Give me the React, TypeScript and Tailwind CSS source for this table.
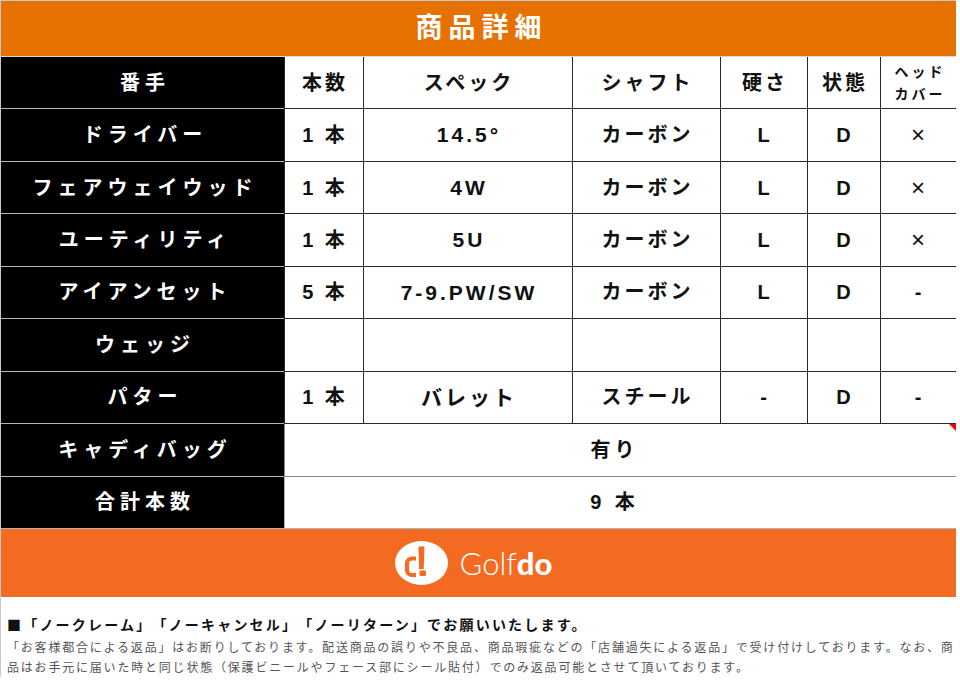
import React from "react";

const font = "font-['Liberation_Sans','Noto_Sans_CJK_JP',sans-serif]";

interface Club {
  name: string;
  count: string;
  spec: string;
  shaft: string;
  flex: string;
  state: string;
  cover: string;
}

const clubs: Club[] = [
  { name: "ドライバー", count: "1 本", spec: "14.5°", shaft: "カーボン", flex: "L", state: "D", cover: "×" },
  { name: "フェアウェイウッド", count: "1 本", spec: "4W", shaft: "カーボン", flex: "L", state: "D", cover: "×" },
  { name: "ユーティリティ", count: "1 本", spec: "5U", shaft: "カーボン", flex: "L", state: "D", cover: "×" },
  { name: "アイアンセット", count: "5 本", spec: "7-9.PW/SW", shaft: "カーボン", flex: "L", state: "D", cover: "-" },
  { name: "ウェッジ", count: "", spec: "", shaft: "", flex: "", state: "", cover: "" },
  { name: "パター", count: "1 本", spec: "バレット", shaft: "スチール", flex: "-", state: "D", cover: "-" },
];

const headCell =
  "flex items-center justify-center border-b border-[#b5b5b5] bg-black pl-[5px] text-[20px] font-bold tracking-[5px] text-white";
const cell =
  "flex items-center justify-center border-b border-l border-[#2a2a2a] pl-[2px] text-[20px] font-bold tracking-[3px] text-[#111]";

function LogoMark() {
  return (
    <svg viewBox="0 0 53 44" className="h-[44px] w-[53px]">
      <ellipse cx="26.5" cy="22" rx="26.5" ry="22" fill="#fff" />
      <path
        d="M21 17.5 h-4 a5 5 0 0 0 -5 5 v6.5 a5 5 0 0 0 5 5 h4"
        fill="none"
        stroke="#f36b21"
        strokeWidth="4.2"
      />
      <path d="M23.5 5.5 h6 l-0.8 22.5 h-4.6 z" fill="#f36b21" />
      <rect x="24.5" y="29.5" width="6.5" height="5.5" rx="1.2" fill="#f36b21" />
    </svg>
  );
}

export default function App() {
  return (
    <div className={`h-[692px] w-[960px] bg-white ${font} [text-spacing-trim:space-all]`}>
      <div className="w-[956px] border-l border-t border-[#c8c8c8]">
        <div className="flex h-[56px] items-center justify-center border-b border-[#d9d9d9] bg-[#e57200] pl-[6px] text-[27px] font-bold tracking-[6px] text-white">
          商品詳細
        </div>

        <div className="grid h-[472px] grid-cols-[283px_79px_209px_148px_87px_73px_76px] grid-rows-9">
          <div className={headCell}>番手</div>
          <div className={cell}>本数</div>
          <div className={cell}>スペック</div>
          <div className={cell}>シャフト</div>
          <div className={cell}>硬さ</div>
          <div className={cell}>状態</div>
          <div className="flex flex-col items-center justify-center border-b border-l border-[#2a2a2a] pl-[3px] text-[14px] font-bold leading-[22px] tracking-[3px] text-[#111]">
            <span>ヘッド</span>
            <span>カバー</span>
          </div>

          {clubs.map((c) => (
            <React.Fragment key={c.name}>
              <div className={headCell}>{c.name}</div>
              <div className={cell}>{c.count}</div>
              <div className={`${cell} tracking-[2px] text-[21px]`}>{c.spec}</div>
              <div className={cell}>{c.shaft}</div>
              <div className={cell}>{c.flex}</div>
              <div className={cell}>{c.state}</div>
              <div className={`${cell} ${c.cover === "×" ? "font-normal text-[24px]" : ""}`}>{c.cover}</div>
            </React.Fragment>
          ))}

          <div className={headCell}>キャディバッグ</div>
          <div className="relative col-span-6 flex items-center justify-center border-b border-l border-[#8a8a8a] pr-[12px] text-[20px] font-bold tracking-[4px] text-[#111]">
            有り
            <span className="absolute right-0 top-0 h-0 w-0 border-l-[7px] border-t-[7px] border-l-transparent border-t-[#ff0000]" />
          </div>

          <div className={headCell}>合計本数</div>
          <div className="col-span-6 flex items-center justify-center border-b border-l border-[#b5b5b5] pr-[12px] text-[20px] font-bold tracking-[4px] text-[#111]">
            9 本
          </div>
        </div>

        <div className="flex h-[68px] items-center justify-center gap-[12px] bg-[#f36b21] pr-[10px]">
          <LogoMark />
          <div className="flex items-baseline text-[31px] leading-none text-white">
            <span className="font-['Lato',sans-serif] font-light">Golf</span>
            <span className="font-['Lato',sans-serif] font-black">do</span>
          </div>
        </div>

        <div className="px-[6px] pt-[16px] font-['Noto_Sans_CJK_JP',sans-serif]">
          <p className="text-[14px] font-bold leading-[22px] tracking-[2.2px] text-[#111]">
            ■「ノークレーム」「ノーキャンセル」「ノーリターン」でお願いいたします。
          </p>
          <p className="mt-[2px] text-[12px] leading-[20px] tracking-[1.8px] text-[#555]">
            <span className="block whitespace-nowrap">
              「お客様都合による返品」はお断りしております。配送商品の誤りや不良品、商品瑕疵などの「店舗過失による返品」で受け付けしております。なお、商
            </span>
            <span className="block whitespace-nowrap">
              品はお手元に届いた時と同じ状態（保護ビニールやフェース部にシール貼付）でのみ返品可能とさせて頂いております。
            </span>
          </p>
        </div>
      </div>
    </div>
  );
}
